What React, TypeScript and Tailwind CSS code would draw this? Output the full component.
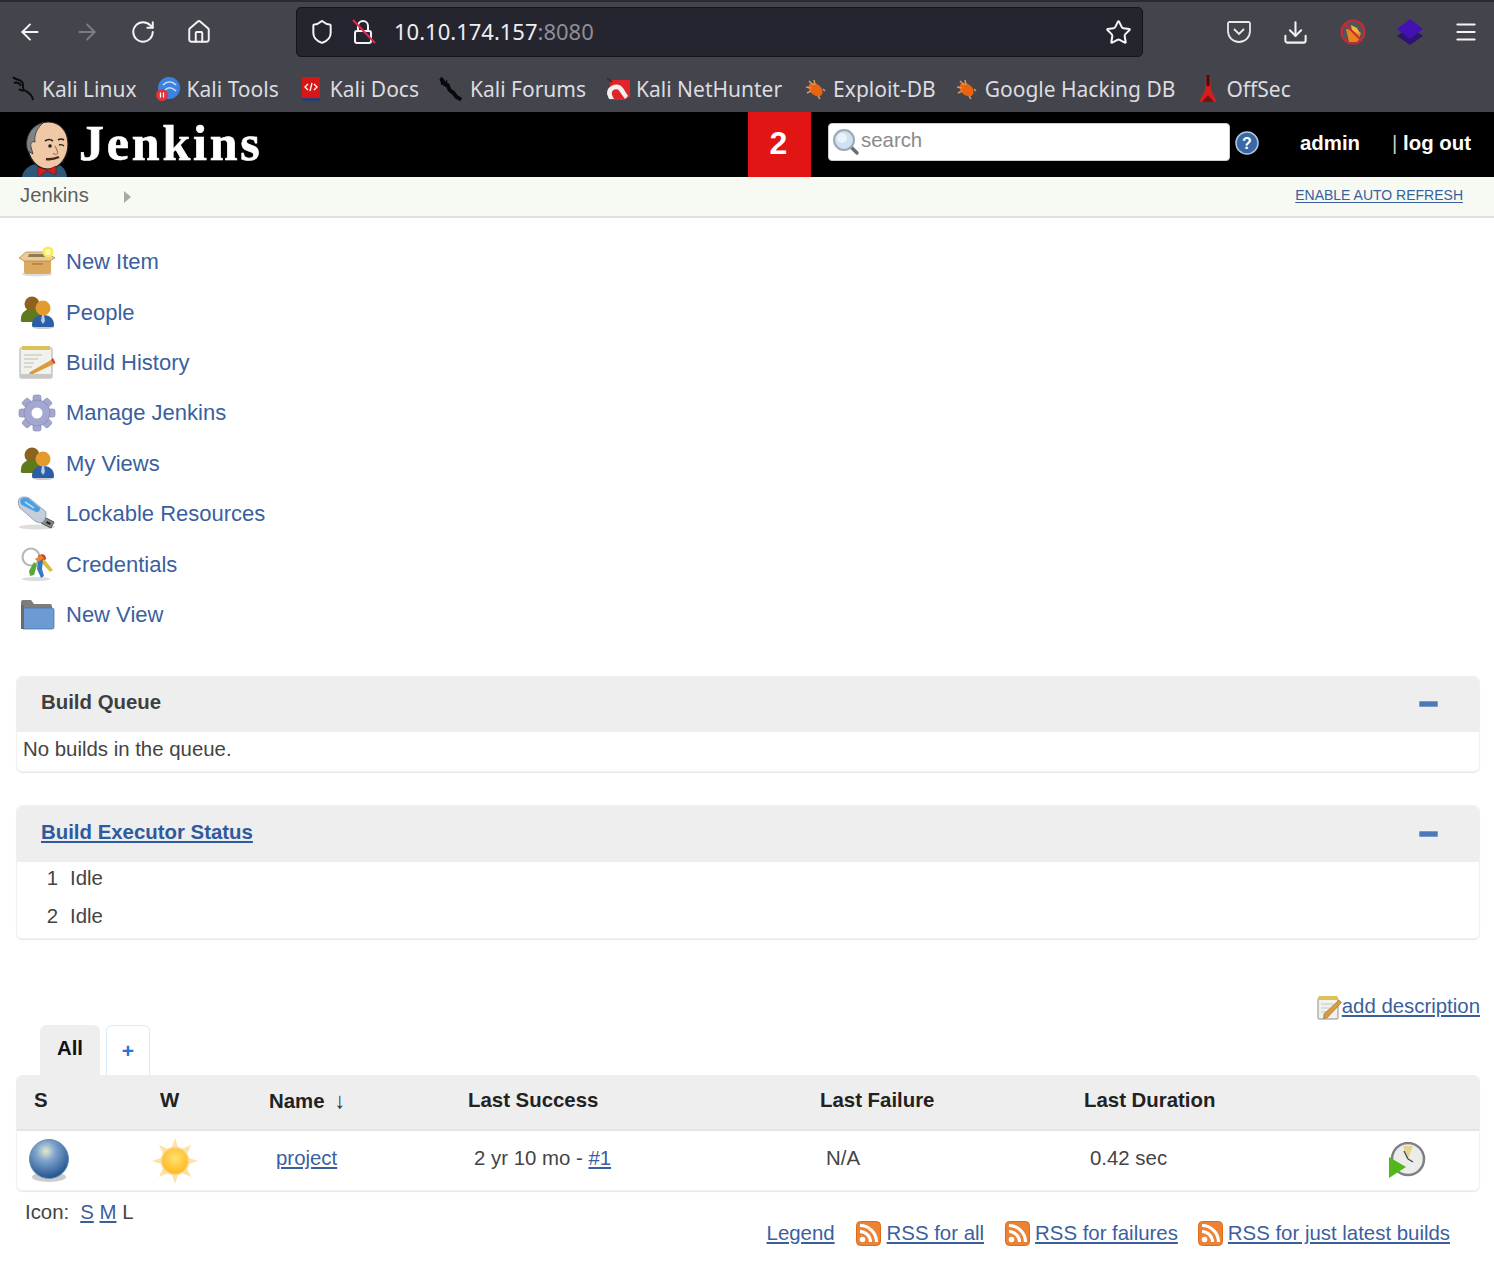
import { FC, ReactNode } from "react";
import { ArrowLeft, ArrowRight, Download, House, Menu, RotateCw, Shield, Star } from "lucide-react";

const sans = "font-['Liberation_Sans',Arial,sans-serif]";
const linkCls = "text-[#3b5f9e] underline decoration-[#3b5f9e] underline-offset-2";

// ---- browser chrome icons ----
const LockSlash = () => (
  <svg width="26" height="28" viewBox="0 0 26 28" fill="none">
    <rect x="4" y="13" width="16" height="12" rx="2" stroke="#f4f4f5" strokeWidth="2" />
    <path d="M7 13V8a5 5 0 0 1 10 0v5" stroke="#f4f4f5" strokeWidth="2" />
    <path d="M2 2 L24 25" stroke="#e22850" strokeWidth="2" />
  </svg>
);

const Pocket = () => (
  <svg width="26" height="26" viewBox="0 0 26 26" fill="none">
    <path d="M3 3h20a1.5 1.5 0 0 1 1 1.5V12a11 11 0 0 1-22 0V4.500A1.500 1.500 0 0 1 3 3z" stroke="#e8e8ea" strokeWidth="1.800" />
    <path d="M8 10l5 5 5-5" stroke="#e8e8ea" strokeWidth="1.800" />
  </svg>
);

const BlockedFox = () => (
  <svg width="28" height="28" viewBox="0 0 28 28">
    <circle cx="14" cy="14" r="11" fill="#55535a" />
    <path d="M7 11l5 1 5-1 5 4-3 9H10z" fill="#e8841c" />
    <path d="M12 7l6 3 3 6-8-3z" fill="#f2b63c" />
    <circle cx="14" cy="14" r="11.500" fill="none" stroke="#c62a32" strokeWidth="2.200" />
    <path d="M6 6l16 16" stroke="#c62a32" strokeWidth="1.800" />
  </svg>
);

const Layers = () => (
  <svg width="28" height="28" viewBox="0 0 28 28">
    <path d="M14 9L27 18 14 27 1 18z" fill="#2f1370" />
    <path d="M14 1L27 11 14 21 1 11z" fill="#4310b4" />
  </svg>
);

// ---- bookmark favicons ----
const KaliDragon = () => (
  <svg width="26" height="28" viewBox="0 0 26 28" fill="none">
    <path d="M2 2c2 3 7 2 9 5 3 3-1 5 2 8 3 2 8 3 9 10M3 8c3-1 6 0 7 3M13 15c-2 1-4 0-5-1" stroke="#0b0b0e" strokeWidth="2" />
  </svg>
);

const KaliTools = () => (
  <svg width="24" height="26" viewBox="0 0 24 26">
    <circle cx="13" cy="12" r="11" fill="#3d82e0" />
    <path d="M7 9c4-4 9-4 13 0M9 14c3-3 7-3 11 1" stroke="#cfe3fa" strokeWidth="1.500" fill="none" />
    <circle cx="6" cy="19" r="6" fill="#e23434" />
    <path d="M4.500 16.500v5M7.500 16.500v5" stroke="#fff" strokeWidth="1.300" />
  </svg>
);

const KaliDocs = () => (
  <svg width="20" height="26" viewBox="0 0 20 26">
    <rect x="1" y="1" width="18" height="24" rx="1" fill="#d81616" />
    <rect x="1" y="22" width="18" height="3" fill="#2b3a73" />
    <path d="M7 8l-3 3 3 3M13 8l3 3-3 3M11 7l-2 8" stroke="#fff" strokeWidth="1.300" fill="none" />
  </svg>
);

const KaliForums = () => (
  <svg width="28" height="26" viewBox="0 0 28 26" fill="none">
    <path d="M3 2l4 6 3 1 2 5 4 3 3 4 5 3" stroke="#08080a" strokeWidth="4" />
    <path d="M3 1l1 8M9 4l-1 7" stroke="#08080a" strokeWidth="1.500" />
  </svg>
);

const NetHunter = () => (
  <svg width="24" height="24" viewBox="0 0 24 24">
    <path d="M4 3h20v17l-6 3H4z" fill="#e0242c" />
    <path d="M1 17a9 9 0 0 1 16-6l5 8-3 3-5-7a4 4 0 0 0-8 3l2 4H3z" fill="#f4f0f0" />
    <path d="M1 1l5 4" stroke="#333" strokeWidth="2" />
  </svg>
);

const Bug = () => (
  <svg width="22" height="22" viewBox="0 0 22 22">
    <ellipse cx="11.500" cy="11.500" rx="8" ry="5.500" transform="rotate(40 11.500 11.500)" fill="#ea640f" />
    <path d="M5 3l4 4M10 2l1 5M2 9l5 1M3 15l4-2M14 18l2 3M19 11l2 2" stroke="#d99a60" strokeWidth="1.500" />
  </svg>
);

const OffSec = () => (
  <svg width="22" height="30" viewBox="0 0 22 30">
    <path d="M9 1h4l1 15 6 12H2l6-12z" fill="#d11f1f" />
    <path d="M9.500 1h3v11h-3z" fill="#3a1010" />
    <path d="M5 28l6-7 6 7z" fill="#7b1010" />
  </svg>
);

const Bookmark: FC<{ icon: ReactNode; label: string; cls: string }> = ({ icon, label, cls }) => (
  <div className={`flex items-center gap-[5px] ${cls}`}>
    <span className="flex w-[27px] shrink-0 justify-center">{icon}</span>
    <span className="whitespace-nowrap">{label}</span>
  </div>
);

// ---- jenkins icons ----
const Mascot = () => (
  <svg width="52" height="56" viewBox="0 0 52 56">
    <path d="M1 56c1-8 8-12 14-13l10 3 10-3c6 1 10 5 11 13z" fill="#2d5878" />
    <path d="M7 24C7 10 15 1 27 1s20 9 20 22-8 25-20 25C16 48 7 38 7 24z" fill="#f0c8a6" stroke="#222" strokeWidth="1.200" />
    <path d="M7 30C3 20 8 5 22 2c-6 5-9 12-8 19-3-1-5 1-4 5l2 7z" fill="#7f8488" stroke="#333" strokeWidth=".8" />
    <path d="M24 20q4-3 8 0M37 19q3-2 6 0" stroke="#222" strokeWidth="1.600" fill="none" />
    <circle cx="29" cy="25" r="1.800" fill="#222" />
    <path d="M38 24q3-1 5 1" stroke="#222" strokeWidth="1.400" fill="none" />
    <path d="M34 25q4 7 2 8-3 1-4-1" stroke="#a87a5c" strokeWidth="1.200" fill="none" />
    <path d="M25 38q6 1 13-2" stroke="#4c2a1a" strokeWidth="2.400" fill="none" />
    <path d="M17 46l9 3 9-4v9l-9-4-9 6z" fill="#cc2222" stroke="#7a1010" strokeWidth=".6" />
  </svg>
);

const NewItemIcon = () => (
  <svg width="38" height="32" viewBox="0 0 38 32">
    <ellipse cx="19" cy="28" rx="15" ry="2.500" fill="#ddd" />
    <path d="M6 13h27v13a2 2 0 0 1-2 2H8a2 2 0 0 1-2-2z" fill="#dba860" />
    <path d="M6 13l5-6h17l5 6z" fill="#6d5a3e" />
    <path d="M1 12l7-6h20l9 6-5 3H6z" fill="#ecca93" stroke="#b88b4e" strokeWidth=".8" />
    <path d="M11 8h16l2 3H10z" fill="#8e7a5a" />
    <rect x="14" y="17" width="11" height="2" fill="#bb8a46" />
    <circle cx="30" cy="6" r="5.500" fill="#f7ee4e" />
    <circle cx="30" cy="6" r="3" fill="#fffbb0" />
  </svg>
);

const PeopleIcon = () => (
  <svg width="36" height="36" viewBox="0 0 36 36">
    <circle cx="13" cy="10" r="7.500" fill="#8c6220" />
    <path d="M2 25c0-7 5-10 11-10s11 3 11 10v3H4a2 2 0 0 1-2-3z" fill="#5d7a1c" />
    <ellipse cx="24" cy="33" rx="11" ry="2" fill="#ccc" />
    <circle cx="24" cy="14" r="7.500" fill="#e39b2c" />
    <path d="M13 31c0-7 5-10 11-10s11 3 11 10c0 2-1 2-2 2H15c-1 0-2 0-2-2z" fill="#2a5ea6" />
    <path d="M23 21h2l1 6-2 3-2-3z" fill="#b7cbe6" />
  </svg>
);

const HistoryIcon = () => (
  <svg width="38" height="36" viewBox="0 0 38 36">
    <rect x="2" y="3" width="32" height="30" rx="1" fill="#f1f1ee" stroke="#a9a9a4" />
    <rect x="4" y="1" width="28" height="4" fill="#dcc258" />
    <path d="M6 10h18M6 14h14M6 18h10M6 22h8" stroke="#cfcfca" strokeWidth="1.500" />
    <path d="M2 29h32v4H2z" fill="#c8c8c4" />
    <path d="M12 27l21-12 3 4-21 10-4 0z" fill="#d99b3b" />
    <path d="M33 15l3 4 1.500-1-2.500-5z" fill="#d93a2b" />
  </svg>
);

const GearIcon = () => (
  <svg width="40" height="38" viewBox="0 0 40 38">
    <g fill="#a4a7cf" stroke="#7f83ae" strokeWidth=".6">
      <rect x="16" y="1" width="8" height="36" rx="2" />
      <rect x="16" y="1" width="8" height="36" rx="2" transform="rotate(45 20 19)" />
      <rect x="16" y="1" width="8" height="36" rx="2" transform="rotate(90 20 19)" />
      <rect x="16" y="1" width="8" height="36" rx="2" transform="rotate(135 20 19)" />
      <circle cx="20" cy="19" r="13" />
    </g>
    <circle cx="20" cy="19" r="5.500" fill="#fff" />
  </svg>
);

const UsbIcon = () => (
  <svg width="40" height="36" viewBox="0 0 40 36">
    <ellipse cx="20" cy="31" rx="18" ry="2.500" fill="#ddd" />
    <path d="M27 21l10 5-3 6-10-5z" fill="#8a8a8a" stroke="#333" strokeWidth=".8" />
    <path d="M30 25l4 2-1 2-4-2z" fill="#222" />
    <path d="M2 3c3-3 7-2 10-1l16 13c2 2 1 8-2 11-2 1-5 1-8-1L3 12C1 9 1 5 2 3z" fill="#c6ced8" stroke="#7d92aa" strokeWidth=".8" />
    <path d="M4 3c3-2 6-1 8 0l11 9c1 2-2 5-4 4L5 9C3 7 3 5 4 3z" fill="#4a9ee3" />
    <path d="M8 6l9 6" stroke="#a7daf8" strokeWidth="2" />
  </svg>
);

const KeysIcon = () => (
  <svg width="38" height="36" viewBox="0 0 38 36" fill="none">
    <ellipse cx="18" cy="33" rx="14" ry="2" fill="#ddd" />
    <circle cx="13" cy="11" r="8.500" stroke="#b8b8b8" strokeWidth="2.200" />
    <path d="M20 10c4-3 8-2 8 3l-4 4z" fill="#d63a2c" />
    <path d="M26 13l9 11-3 2-9-10z" fill="#dbbf3a" />
    <path d="M16 16l-5 9 1 5 4-1 3-10z" fill="#58a83a" />
    <path d="M20 13l5 2-1 8 2 7-3 2-4-9z" fill="#3a78c0" />
    <path d="M17 13l6-4 3 3-6 4z" fill="#e08a2c" />
  </svg>
);

const FolderIcon = () => (
  <svg width="36" height="32" viewBox="0 0 36 32">
    <path d="M2 3a2 2 0 0 1 2-2h8l3 4h16a2 2 0 0 1 2 2v22H2z" fill="#7d7d7d" />
    <path d="M4 9h29a2 2 0 0 1 2 2v17a2 2 0 0 1-2 2H4z" fill="#6b9bd2" stroke="#4a76ad" strokeWidth=".8" />
    <path d="M2 6h3v24H2z" fill="#6a6a6a" />
  </svg>
);

const SearchIcon = () => (
  <svg width="28" height="28" viewBox="0 0 28 28" fill="none">
    <path d="M18 18l7 7" stroke="#6c6c6c" strokeWidth="3.400" strokeLinecap="round" />
    <circle cx="12" cy="12" r="10" fill="#cfe0f3" stroke="#9aa7b5" strokeWidth="2" />
    <circle cx="10" cy="10" r="5" fill="#eaf2fb" />
  </svg>
);

const HelpIcon = () => (
  <svg width="24" height="24" viewBox="0 0 24 24">
    <circle cx="12" cy="12" r="11" fill="#3769a6" stroke="#b4c8e0" strokeWidth="1.500" />
    <text x="12" y="17.500" textAnchor="middle" fontSize="16" fontWeight="700" fill="#fff" fontFamily="Liberation Sans">?</text>
  </svg>
);

const NotepadIcon = () => (
  <svg width="25" height="25" viewBox="0 0 25 25">
    <rect x="1" y="3" width="20" height="21" rx="1" fill="#f1f1ee" stroke="#8e8e88" />
    <rect x="1.500" y="1" width="19" height="4" fill="#dcc258" />
    <path d="M4 9h12M4 13h8M4 17h6" stroke="#c8c8c4" strokeWidth="1.200" />
    <path d="M7 19l15-14 2.500 2.500-14 15-4 1z" fill="#d99b3b" stroke="#7a5a20" strokeWidth=".5" />
  </svg>
);

const Ball = () => (
  <svg width="42" height="44" viewBox="0 0 42 44">
    <defs>
      <radialGradient id="ball" cx="42%" cy="30%" r="70%">
        <stop offset="0%" stopColor="#e4e9cf" />
        <stop offset="35%" stopColor="#7fa5cd" />
        <stop offset="100%" stopColor="#23528f" />
      </radialGradient>
    </defs>
    <ellipse cx="21" cy="38" rx="17" ry="5" fill="#ccc" />
    <circle cx="21" cy="20" r="19.500" fill="url(#ball)" stroke="#6c8fbb" strokeWidth="1" />
  </svg>
);

const Sun = () => (
  <svg width="46" height="46" viewBox="0 0 46 46">
    <g fill="#fde1a6">
      <path d="M23 0l3 9h-6z" />
      <path d="M23 46l3-9h-6z" />
      <path d="M0 23l9-3v6z" />
      <path d="M46 23l-9-3v6z" />
      <path d="M7 7l9 4-5 5z" />
      <path d="M39 7l-9 4 5 5z" />
      <path d="M7 39l9-4-5-5z" />
      <path d="M39 39l-9-4 5-5z" />
    </g>
    <defs>
      <radialGradient id="sun" cx="50%" cy="40%" r="60%">
        <stop offset="0%" stopColor="#ffe270" />
        <stop offset="100%" stopColor="#fdb71e" />
      </radialGradient>
    </defs>
    <circle cx="23" cy="23" r="13.500" fill="url(#sun)" stroke="#fcd68c" strokeWidth="1.500" />
  </svg>
);

const BuildClock = () => (
  <svg width="38" height="38" viewBox="0 0 38 38">
    <circle cx="20" cy="17" r="16" fill="#ecece9" stroke="#7e8086" strokeWidth="2.500" />
    <path d="M20 17L15 4h10z" fill="#e4d48e" />
    <path d="M20 17l-4-8M20 17l5 3" stroke="#444" strokeWidth="1.300" />
    <path d="M1 15l17 10L1 36z" fill="#52b71b" />
  </svg>
);

const Rss = () => (
  <svg width="25" height="25" viewBox="0 0 25 25">
    <rect x=".5" y=".5" width="24" height="24" rx="4" fill="#ec8233" stroke="#e0691c" />
    <circle cx="6.500" cy="18.500" r="2.800" fill="#fff" />
    <path d="M4 10.500a10.500 10.500 0 0 1 10.500 10.500M4 4.500a16.500 16.500 0 0 1 16.500 16.500" stroke="#fff" strokeWidth="3.200" fill="none" />
  </svg>
);

const sideItems: { label: string; icon: ReactNode }[] = [
  { label: "New Item", icon: <NewItemIcon /> },
  { label: "People", icon: <PeopleIcon /> },
  { label: "Build History", icon: <HistoryIcon /> },
  { label: "Manage Jenkins", icon: <GearIcon /> },
  { label: "My Views", icon: <PeopleIcon /> },
  { label: "Lockable Resources", icon: <UsbIcon /> },
  { label: "Credentials", icon: <KeysIcon /> },
  { label: "New View", icon: <FolderIcon /> },
];

const bookmarks: { label: string; icon: ReactNode; cls: string }[] = [
  { label: "Kali Linux", icon: <KaliDragon />, cls: "ml-[10px]" },
  { label: "Kali Tools", icon: <KaliTools />, cls: "ml-[18px]" },
  { label: "Kali Docs", icon: <KaliDocs />, cls: "ml-[19px]" },
  { label: "Kali Forums", icon: <KaliForums />, cls: "ml-[19px]" },
  { label: "Kali NetHunter", icon: <NetHunter />, cls: "ml-[18px]" },
  { label: "Exploit-DB", icon: <Bug />, cls: "ml-[19px]" },
  { label: "Google Hacking DB", icon: <Bug />, cls: "ml-[17px]" },
  { label: "OffSec", icon: <OffSec />, cls: "ml-[19px]" },
];

const Collapse = () => <span className="mt-[3px] block h-[6px] w-[19px] rounded-[1px] border border-[#7b9ac8] bg-[#4a78b8]" />;

const Panel: FC<{ title: ReactNode; headH: string; children: ReactNode }> = ({ title, headH, children }) => (
  <section className="ml-4 mr-[14px] rounded-md border border-[#f0f0f0] shadow-[0_1px_1px_#e8e8e8]">
    <div className={`flex items-center justify-between rounded-t-md bg-[#eeeeee] pb-[4px] pl-6 pr-[41px] text-[20.4px] font-bold text-[#3f3f3f] ${headH}`}>
      {title}
      <Collapse />
    </div>
    {children}
  </section>
);

const tableCols = "grid grid-cols-[126px_109px_199px_352px_264px_286px_1fr]";

const App = () => (
  <div className={`h-[1262px] w-[1494px] overflow-hidden bg-white ${sans} text-[#444]`}>
    {/* browser chrome */}
    <div className="h-[112px] border-t-2 border-[#2b2a33] bg-[#44444c] font-['Noto_Sans',sans-serif] text-[#dcdce0]">
      <div className="flex h-[60px] items-center">
        <div className="flex w-[296px] items-center pl-[17px]">
          <ArrowLeft size={26} strokeWidth={1.8} className="text-[#f4f4f5]" />
          <ArrowRight size={26} strokeWidth={1.8} className="ml-[31px] text-[#7d7c85]" />
          <RotateCw size={26} strokeWidth={1.8} className="ml-[30px] text-[#f4f4f5]" />
          <House size={26} strokeWidth={1.8} className="ml-[30px] text-[#f4f4f5]" />
        </div>
        <div className="flex h-[50px] w-[847px] items-center rounded-[5px] border border-[#15141a] bg-[#25252f] pl-[12px] pr-[10px]">
          <Shield size={26} strokeWidth={1.8} className="text-[#f4f4f5]" />
          <span className="ml-[16px]"><LockSlash /></span>
          <span className="ml-[17px] mb-[1px] text-[22px] text-[#eeeef0]">
            10.10.174.157<span className="text-[#8f8f96]">:8080</span>
          </span>
          <Star size={27} strokeWidth={1.8} className="ml-auto text-[#f4f4f5]" />
        </div>
        <span className="ml-[83px]"><Pocket /></span>
        <Download size={27} strokeWidth={1.8} className="ml-[30px] text-[#f4f4f5]" />
        <span className="ml-[30px]"><BlockedFox /></span>
        <span className="ml-[29px]"><Layers /></span>
        <Menu size={26} strokeWidth={1.8} className="ml-[29px] text-[#f4f4f5]" />
      </div>
      <div className="flex h-[50px] items-center pt-[4px] text-[21px] leading-none">
        {bookmarks.map((b) => (
          <Bookmark key={b.label} {...b} />
        ))}
      </div>
    </div>

    {/* jenkins header */}
    <header className="flex h-[65px] items-center bg-black text-white">
      <div className="ml-[21px] self-end leading-none"><Mascot /></div>
      <span className="ml-[6px] w-[669px] pb-[3px] font-['Liberation_Serif',serif] text-[50px] font-bold tracking-[2.8px] [-webkit-text-stroke:0.7px_white]">Jenkins</span>
      <div className="flex h-full w-[63px] items-center justify-center bg-[#e21515] pb-[4px] pr-[2px] text-[32px] font-bold">2</div>
      <div className="mb-[6px] ml-[17px] flex h-[38px] w-[402px] items-center rounded-[4px] border border-[#ccc] bg-white pl-[3px] text-[20.4px] text-[#8a8a8a]">
        <SearchIcon />
        <span className="mb-[3px] ml-[1px]">search</span>
      </div>
      <span className="mb-[3px] ml-[5px]"><HelpIcon /></span>
      <span className="mb-[2px] ml-[41px] text-[20.4px] font-bold">admin</span>
      <span className="mb-[2px] ml-[32px] text-[20.4px] font-bold"><span className="font-normal text-[#ccc]">|</span> log out</span>
    </header>

    {/* breadcrumb */}
    <div className="flex h-[41px] items-center border-b-2 border-[#dfe2dc] bg-[#f6faf2] pl-[20px] pr-[31px]">
      <span className="mb-[3px] text-[20.3px] text-[#5f5f5f]">Jenkins</span>
      <span className="ml-[35px] h-0 w-0 border-y-[6px] border-l-[7px] border-y-transparent border-l-[#a8aaa6]" />
      <a className={`mb-[2px] ml-auto text-[14px] ${linkCls}`}>ENABLE AUTO REFRESH</a>
    </div>

    {/* side tasks */}
    <nav className="pt-[18.6px] text-[22px]">
      {sideItems.map((item) => (
        <div key={item.label} className="flex h-[50.4px] items-center">
          <span className="flex w-[66px] justify-center pl-[18px] pr-[10px]"><span className="shrink-0">{item.icon}</span></span>
          <a className="text-[#3b5f9e]">{item.label}</a>
        </div>
      ))}
    </nav>

    <div className="mt-[36.4px]">
      <Panel title="Build Queue" headH="h-[55px]">
        <div className="flex h-[39px] items-center pb-[5px] pl-[6px] text-[20.4px]">No builds in the queue.</div>
      </Panel>
    </div>

    <div className="mt-[33px]">
      <Panel title={<a className="text-[#2f5a9e] underline underline-offset-2">Build Executor Status</a>} headH="h-[56px]">
        <div className="text-[20.4px]">
          {["1", "2"].map((n) => (
            <div key={n} className="flex h-[38px] items-center pb-[5px]">
              <span className="w-[41px] text-right">{n}</span>
              <span className="ml-[12px]">Idle</span>
            </div>
          ))}
        </div>
      </Panel>
    </div>

    {/* view */}
    <div className="mt-[55px] flex h-[27px] items-center justify-end pr-[14px] text-[20.4px]">
      <NotepadIcon />
      <a className={`mb-[2px] ${linkCls}`}>add description</a>
    </div>
    <div className="mt-[4px] flex h-[50px] items-stretch pl-[40px]">
      <div className="flex w-[60px] items-center justify-center rounded-t-md bg-[#eeeeee] pb-[4px] text-[20.4px] font-bold text-[#111]">All</div>
      <div className="ml-[6px] flex w-[44px] items-center justify-center rounded-t-md border border-b-0 border-[#d8ebff] text-[21px] font-bold text-[#2a73d8]">+</div>
    </div>
    <div className="ml-4 mr-[14px] rounded-md border border-t-0 border-[#f0f0f0] shadow-[0_1px_1px_#e8e8e8]">
      <div className={`${tableCols} h-[56px] items-center rounded-t-md border-b-2 border-[#e4e4e4] bg-[#eeeeee] pb-[3px] text-[20.4px] font-bold text-[#222]`}>
        <span className="pl-[17px]">S</span>
        <span className="pl-[17px]">W</span>
        <span className="pl-[17px] leading-[24px]">Name <span className="ml-[4px] text-[22px] leading-none font-normal text-[#333]">↓</span></span>
        <span className="pl-[17px]">Last Success</span>
        <span className="pl-[17px]">Last Failure</span>
        <span className="pl-[17px]">Last Duration</span>
        <span />
      </div>
      <div className={`${tableCols} h-[59px] items-center text-[20.4px]`}>
        <span className="pl-[11px]"><Ball /></span>
        <span className="pl-[9px]"><Sun /></span>
        <span className="mb-[5px] pl-[24px]"><a className={linkCls}>project</a></span>
        <span className="mb-[5px] pl-[23px]">2 yr 10 mo - <a className={linkCls}>#1</a></span>
        <span className="mb-[5px] pl-[23px]">N/A</span>
        <span className="mb-[5px] pl-[23px]">0.42 sec</span>
        <span className="pl-[35px]"><BuildClock /></span>
      </div>
    </div>

    <div className="ml-4 mr-[14px] text-[20.4px]">
      <div className="pl-[9px] pt-[6px]">
        Icon:<span className="ml-[11px]"><a className={linkCls}>S</a> <a className={linkCls}>M</a> L</span>
      </div>
      <div className="mt-[-10px] flex items-center justify-end pr-[30px]">
        <a className={linkCls}>Legend</a>
        <span className="ml-[21px] flex items-center gap-[6px]"><Rss /><a className={linkCls}>RSS for all</a></span>
        <span className="ml-[21px] flex items-center gap-[5px]"><Rss /><a className={linkCls}>RSS for failures</a></span>
        <span className="ml-[20px] flex items-center gap-[5px]"><Rss /><a className={linkCls}>RSS for just latest builds</a></span>
      </div>
    </div>
  </div>
);

export default App;
